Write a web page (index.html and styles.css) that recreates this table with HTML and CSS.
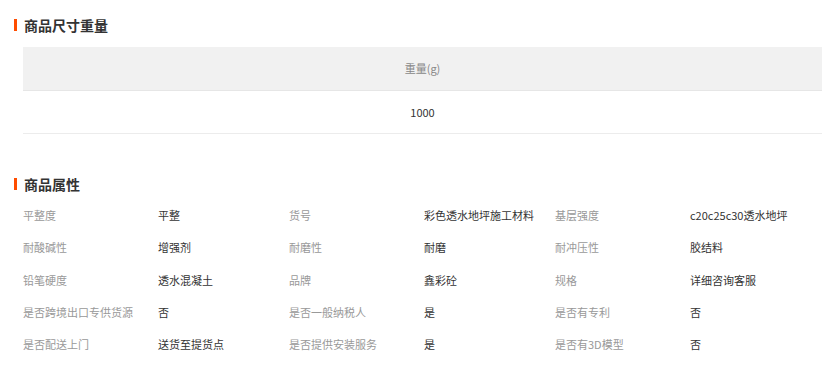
FILE: index.html
```html
<!DOCTYPE html>
<html lang="zh-CN">
<head>
<meta charset="UTF-8">
<title>商品参数</title>
<link rel="stylesheet" href="styles.css">
</head>
<body>
<div class="detail">
    <h3 class="section-title">商品尺寸重量</h3>
    <div class="size-table">
        <div class="size-head">重量(g)</div>
        <div class="size-body">1000</div>
    </div>

    <h3 class="section-title attr-title">商品属性</h3>
    <div class="attr-list">
        <div class="attr-name">平整度</div><div class="attr-value">平整</div>
        <div class="attr-name">货号</div><div class="attr-value">彩色透水地坪施工材料</div>
        <div class="attr-name">基层强度</div><div class="attr-value">c20c25c30透水地坪</div>

        <div class="attr-name">耐酸碱性</div><div class="attr-value">增强剂</div>
        <div class="attr-name">耐磨性</div><div class="attr-value">耐磨</div>
        <div class="attr-name">耐冲压性</div><div class="attr-value">胶结料</div>

        <div class="attr-name">铅笔硬度</div><div class="attr-value">透水混凝土</div>
        <div class="attr-name">品牌</div><div class="attr-value">鑫彩砼</div>
        <div class="attr-name">规格</div><div class="attr-value">详细咨询客服</div>

        <div class="attr-name">是否跨境出口专供货源</div><div class="attr-value">否</div>
        <div class="attr-name">是否一般纳税人</div><div class="attr-value">是</div>
        <div class="attr-name">是否有专利</div><div class="attr-value">否</div>

        <div class="attr-name">是否配送上门</div><div class="attr-value">送货至提货点</div>
        <div class="attr-name">是否提供安装服务</div><div class="attr-value">是</div>
        <div class="attr-name">是否有3D模型</div><div class="attr-value">否</div>
    </div>
</div>
</body>
</html>
```

FILE: styles.css
```css
body {
    margin: 0;
    font-family: "Noto Sans CJK SC", "Liberation Sans", sans-serif;
    font-size: 11px;
    color: #333;
    background: #fff;
}

.detail {
    width: 822px;
    padding-top: 15px;
}

.section-title {
    display: flex;
    align-items: center;
    margin: 0 0 0 14px;
    height: 20px;
    font-size: 14px;
    font-weight: bold;
    color: #333;
}
.section-title::before {
    content: "";
    width: 3px;
    height: 12px;
    margin-right: 7px;
    background-color: #ff4d00;
}

.size-table {
    margin: 12px 0 0 23px;
    text-align: center;
}
.size-head {
    height: 43px;
    line-height: 43px;
    background-color: #f1f1f1;
    border-bottom: 1px solid #e6e6e6;
    color: #888;
}
.size-body {
    height: 42px;
    line-height: 42px;
    border-bottom: 1px solid #ececec;
}

.attr-title {
    margin-top: 40px;
}

.attr-list {
    display: grid;
    grid-template-columns: 135px 131px 135px 131px 135px 131px;
    grid-auto-rows: 32.25px;
    margin: 5px 0 0 23px;
    align-items: center;
}
.attr-name {
    color: #999;
    white-space: nowrap;
}
.attr-value {
    color: #333;
    white-space: nowrap;
}
```
